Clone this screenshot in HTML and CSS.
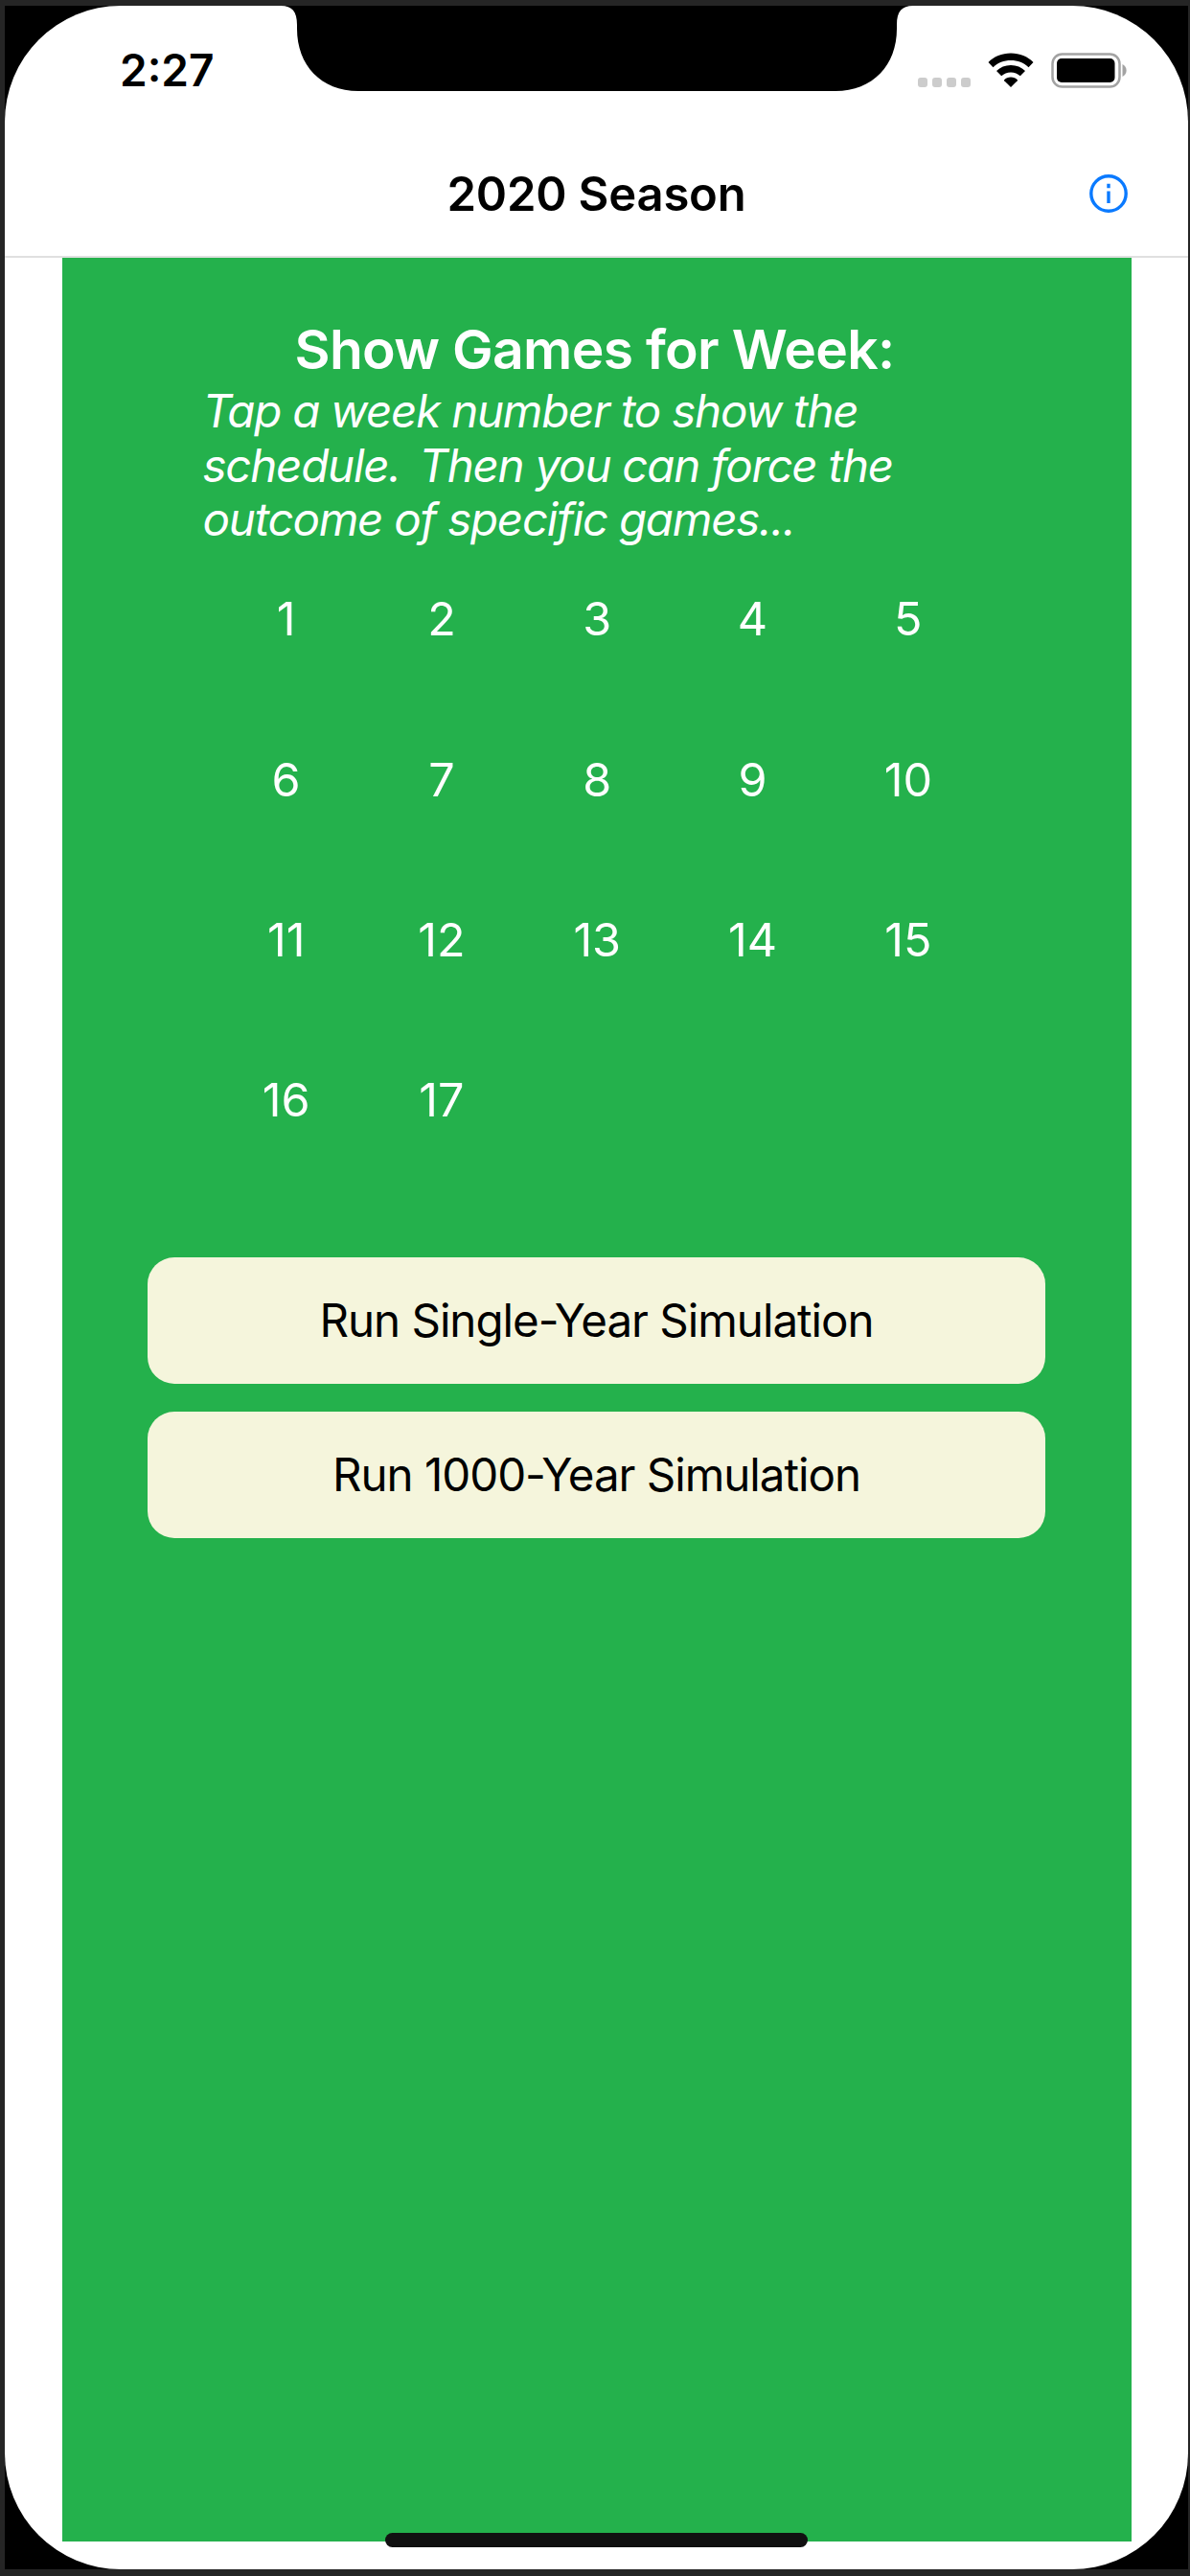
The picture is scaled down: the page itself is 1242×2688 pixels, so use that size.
FILE: index.html
```html
<!DOCTYPE html>
<html lang="en">
<head>
<meta charset="utf-8">
<title>2020 Season</title>
<link rel="stylesheet" href="styles.css">
</head>
<body>
<div class="bezel">
<div class="screen">
  <header class="status-bar">
    <span class="time">2:27</span>
    <svg class="notch" viewBox="0 0 660 89" aria-hidden="true">
      <path d="M0 0C12 0 17 6 17 20V24C17 62 42 89 81 89H579C618 89 643 62 643 24V20C643 6 648 0 660 0Z"/>
    </svg>
    <div class="indicators">
      <span class="cellular"><i></i><i></i><i></i><i></i></span>
      <svg class="wifi" viewBox="0 0 48 37" aria-hidden="true">
        <path d="M24 0.5C33.500 0.500 41.500 4 47.500 10L42.500 15.200C37.500 10.500 31.300 8 24 8S10.500 10.500 5.500 15.200L0.500 10C6.500 4 14.500 0.500 24 0.500Z"/>
        <path d="M24 13C30 13 35 15.200 39 19L33.800 24.300C31 22 28 20.600 24 20.600S17 22 14.200 24.300L9 19C13 15.200 18 13 24 13Z"/>
        <path d="M24 25.500C27 25.500 29 26.600 30.800 28.200Q31.200 28.700 30.800 29.200L24 36L17.200 29.200Q16.800 28.700 17.200 28.200C19 26.600 21 25.500 24 25.500Z"/>
      </svg>
      <svg class="battery" viewBox="0 0 80 37" aria-hidden="true">
        <rect class="battery-shell" x="1.500" y="1.500" width="70" height="34" rx="10"/>
        <rect x="6" y="6" width="60.500" height="25" rx="5"/>
        <path class="battery-cap" d="M74.500 12C80 14.500 80 22.500 74.500 25Z"/>
      </svg>
    </div>
  </header>
  <nav class="nav-bar">
    <h1 class="nav-title">2020 Season</h1>
    <button class="info" aria-label="Info">
      <svg viewBox="0 0 40 40" aria-hidden="true">
        <circle cx="20" cy="20" r="18.200"/>
        <path d="M20 9.800V14.200M20 17.500V30"/>
      </svg>
    </button>
  </nav>
  <main class="content">
    <h2 class="heading">Show Games for Week:</h2>
    <p class="hint">Tap a week number to show the<br>schedule.<span class="sentence-gap">&nbsp;</span> Then you can force the<br>outcome of specific games...</p>
    <div class="weeks">
      <span>1</span><span>2</span><span>3</span><span>4</span><span>5</span>
      <span>6</span><span>7</span><span>8</span><span>9</span><span>10</span>
      <span>11</span><span>12</span><span>13</span><span>14</span><span>15</span>
      <span>16</span><span>17</span>
    </div>
    <div class="actions">
      <button class="action">Run Single-Year Simulation</button>
      <button class="action">Run 1000-Year Simulation</button>
    </div>
  </main>
  <div class="home-indicator"></div>
</div>
</div>
</body>
</html>
```
FILE: styles.css
```css
* {
  box-sizing: border-box;
}

body {
  margin: 0;
  background: #252525;
  font-family: Inter, "Liberation Sans", sans-serif;
  color: #000;
}

button {
  border: 0;
  padding: 0;
  background: none;
  font: inherit;
  color: inherit;
}

.bezel {
  width: 1235px;
  height: 2675px;
  margin: 6px 0 0 5px;
  background: #000;
}

.screen {
  position: relative;
  display: flex;
  flex-direction: column;
  height: 100%;
  border-radius: 121px;
  background: #fff;
}

.status-bar {
  display: grid;
  grid-template-columns: 288px 660px 287px;
  height: 131px;
}

.time {
  padding: 39px 0 0 120px;
  font-size: 46px;
  font-weight: 600;
  line-height: 56px;
}

.notch {
  width: 660px;
  height: 89px;
}

.indicators {
  display: flex;
  align-items: flex-start;
  padding: 48.5px 0 0 5px;
}

.cellular {
  display: flex;
  gap: 5px;
  margin: 26px 18px 0 0;
}

.cellular i {
  width: 10px;
  height: 10px;
  border-radius: 3px;
  background: #ccc;
}

.wifi {
  width: 48px;
  height: 37px;
  margin-right: 18px;
}

.battery {
  width: 80px;
  height: 37px;
}

.battery-shell {
  fill: none;
  stroke: #a3a3a3;
  stroke-width: 2.5;
}

.battery-cap {
  fill: #a3a3a3;
}

.nav-bar {
  display: grid;
  grid-template-columns: 1fr auto 1fr;
  align-items: center;
  height: 132px;
  border-bottom: 2px solid #e0e0e0;
}

.nav-title {
  grid-column: 2;
  margin: 0;
  padding-top: 2px;
  font-size: 49px;
  font-weight: 600;
  line-height: 60px;
  letter-spacing: -0.2px;
}

.info {
  justify-self: end;
  width: 40px;
  height: 40px;
  margin-right: 63px;
}

.info svg {
  display: block;
  fill: none;
  stroke: #0a7aff;
  stroke-width: 3.4;
}

.content {
  display: flex;
  flex-direction: column;
  width: 1116px;
  height: 2383px;
  margin-left: 59.5px;
  padding-top: 60px;
  background: #24b14c;
  color: #fff;
}

.heading {
  margin: 0 4px 0 0;
  text-align: center;
  font-size: 57px;
  font-weight: 600;
  line-height: 72px;
  letter-spacing: -0.7px;
}

.hint {
  margin: 0 0 0 147px;
  font-size: 47.5px;
  font-style: italic;
  line-height: 56.7px;
  letter-spacing: -1.24px;
}

.sentence-gap {
  letter-spacing: -6px;
}

.weeks {
  display: grid;
  grid-template-columns: repeat(5, 162.3px);
  grid-auto-rows: 167.4px;
  margin: 45px 0 0 153px;
  font-size: 48.5px;
  line-height: 60px;
  text-align: center;
}

.actions {
  display: flex;
  flex-direction: column;
  gap: 29px;
  margin: 26px 89.5px 0;
}

.action {
  height: 132px;
  border-radius: 28px;
  background: #f5f5dc;
  font-size: 47.5px;
  letter-spacing: -1.02px;
  color: #000;
}

.home-indicator {
  position: absolute;
  left: 397px;
  bottom: 23px;
  width: 441px;
  height: 15px;
  border-radius: 8px;
  background: #111;
}
```
